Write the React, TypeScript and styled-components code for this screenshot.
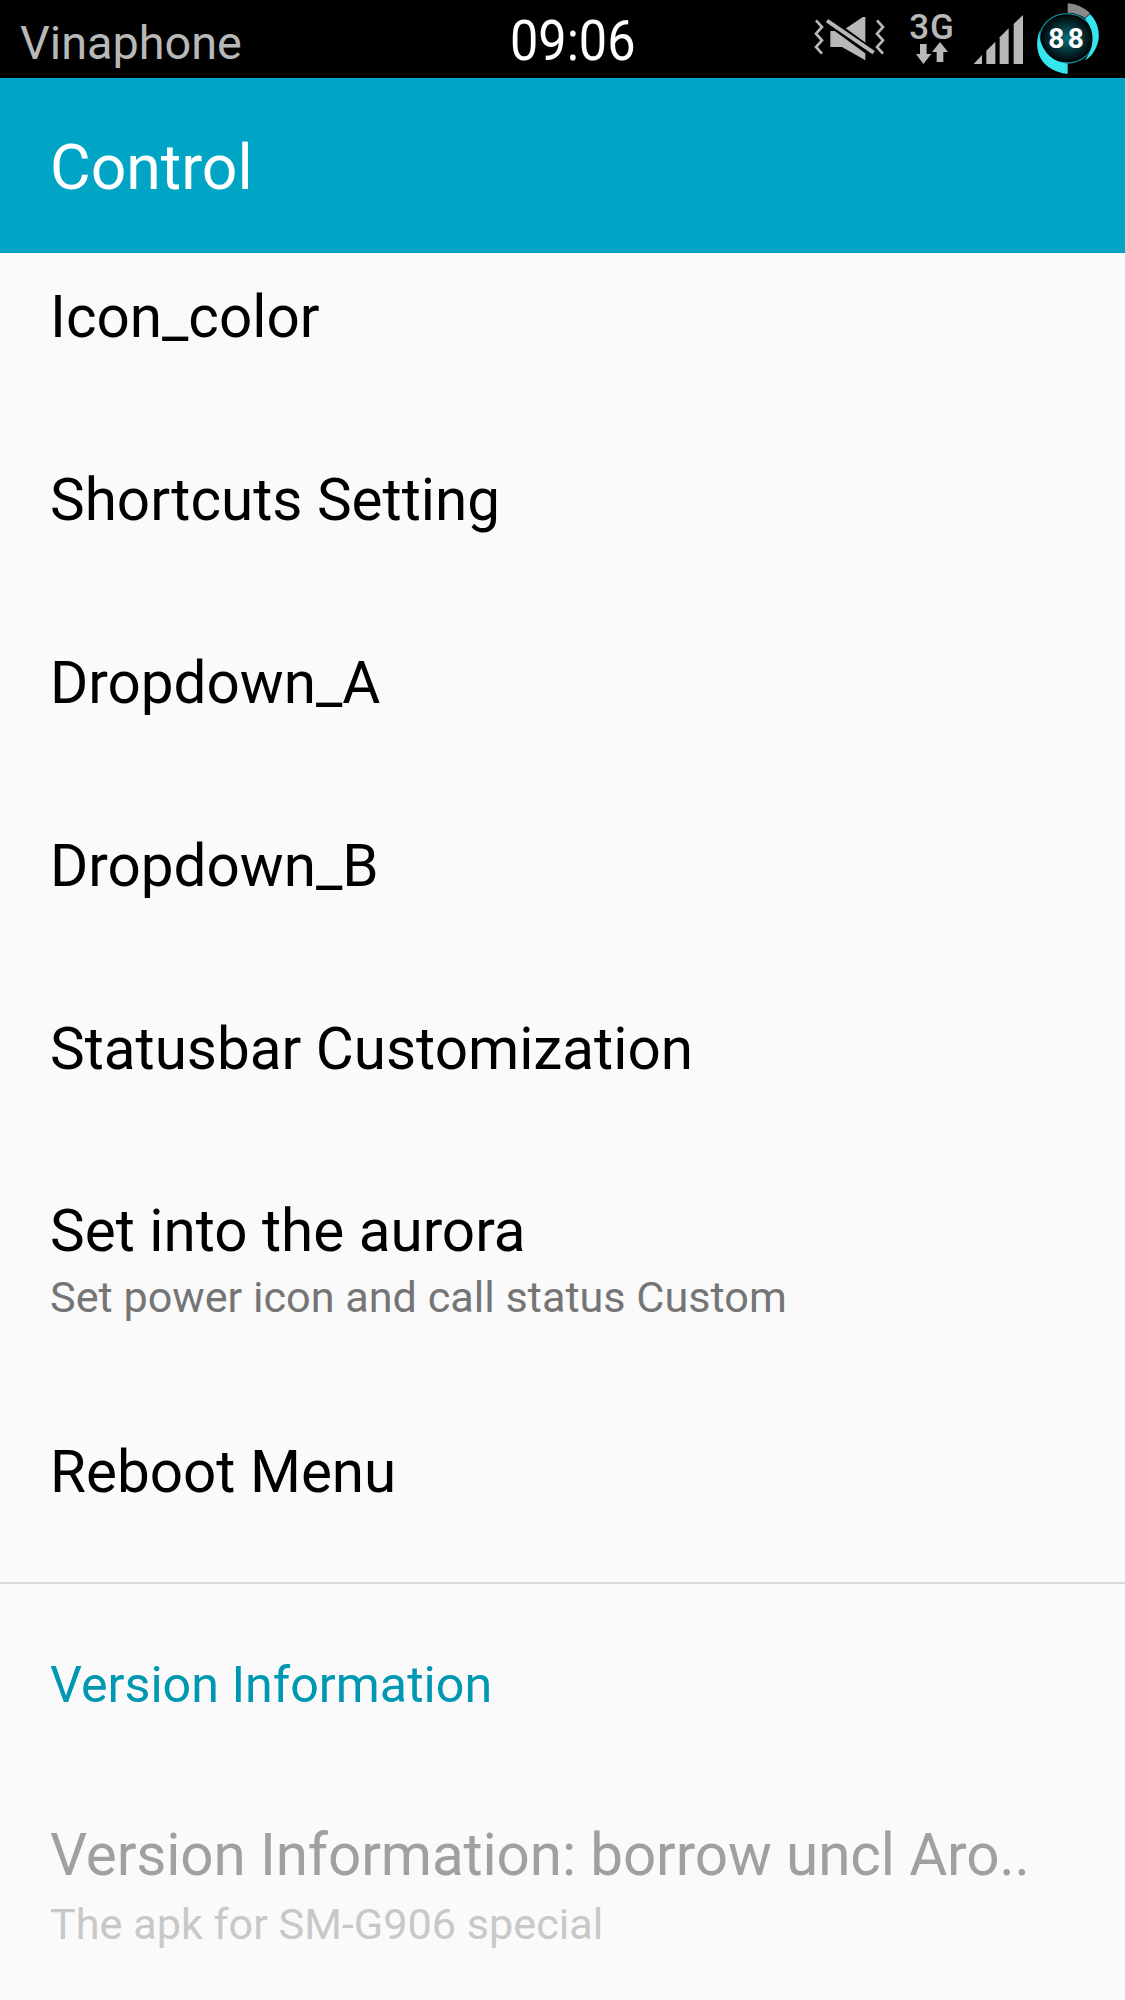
import React from 'react';
import styled, { createGlobalStyle } from 'styled-components';

const GlobalStyle = createGlobalStyle`
  html, body {
    margin: 0;
    padding: 0;
    background: #fafafa;
  }
`;

const Screen = styled.div`
  width: 1125px;
  height: 2000px;
  overflow: hidden;
  background: #fafafa;
  font-family: Roboto, "Liberation Sans", sans-serif;
  display: flex;
  flex-direction: column;
`;

const StatusBar = styled.div`
  height: 78px;
  flex: none;
  background: #000;
  display: flex;
  align-items: center;
  padding-left: 20px;
  position: relative;
  z-index: 2;
`;

const Carrier = styled.div`
  width: 490px;
  padding-top: 8px;
  color: #b8b8b8;
  font-size: 46.8px;
  white-space: nowrap;
`;

const Clock = styled.div`
  color: #fff;
  font-size: 56px;
  width: 121px;
  padding-top: 4px;
  white-space: nowrap;
  transform: scaleX(0.9);
  transform-origin: left center;
`;

const StatusIcons = styled.div`
  margin-left: auto;
  height: 78px;
  display: flex;
  align-items: center;
  padding-right: 25px;
`;

const Network = styled.div`
  width: 42px;
  margin: 0 20px 0 24px;
  display: flex;
  flex-direction: column;
  align-items: center;
  color: #b8b8b8;
`;

const NetworkLabel = styled.div`
  font-size: 35px;
  font-weight: 500;
  line-height: 28px;
  letter-spacing: 1px;
`;

const SignalSvg = styled.svg`
  margin-right: 12px;
`;

const AppBar = styled.div`
  height: 175px;
  flex: none;
  background: #00a5c5;
  display: flex;
  align-items: center;
  padding: 4px 0 0 50px;
  box-sizing: border-box;
  color: #fff;
  font-size: 62.5px;
  position: relative;
  z-index: 1;
`;

const List = styled.div`
  margin-top: -28px;
  display: flex;
  flex-direction: column;
`;

const Row = styled.div`
  height: 183px;
  padding: 0 50px;
  display: flex;
  flex-direction: column;
  justify-content: center;
  box-sizing: border-box;
`;

const TallRow = styled(Row)`
  height: 240px;
`;

const Title = styled.div<{ $disabled?: boolean }>`
  font-size: 58.4px;
  line-height: 68px;
  letter-spacing: ${p => (p.$disabled ? '-0.13px' : '0')};
  color: ${p => (p.$disabled ? '#a0a0a0' : '#000')};
  white-space: nowrap;
`;

const Subtitle = styled.div<{ $disabled?: boolean }>`
  margin-top: ${p => (p.$disabled ? '11px' : '8px')};
  font-size: 43.2px;
  line-height: 50px;
  color: ${p => (p.$disabled ? '#c8c8c8' : '#757575')};
  white-space: nowrap;
`;

const Divider = styled.div`
  height: 2px;
  margin-top: 19px;
  background: #d9d9d9;
`;

const SectionHeader = styled.div`
  padding: 73px 50px 52px;
  font-size: 50.2px;
  line-height: 56px;
  color: #0097b2;
`;

const MuteIcon = () => (
  <svg width="75" height="45" viewBox="115 55 225 135">
    <path d="M170 97H205L275 50V185L205 145H170Z" fill="#b8b8b8" />
    <path d="M155 60L305 170" stroke="#000" strokeWidth="26" />
    <path d="M160 66L300 162" stroke="#b8b8b8" strokeWidth="12" />
    <path
      d="M127 65L145 85L127 105L145 125L127 145L145 165"
      fill="none"
      stroke="#b8b8b8"
      strokeWidth="8"
    />
    <path
      d="M310 65L328 85L310 105L328 125L310 145L328 165"
      fill="none"
      stroke="#b8b8b8"
      strokeWidth="8"
    />
  </svg>
);

const NetworkArrows = () => (
  <svg width="32" height="22" viewBox="0 0 96 66" fill="#b8b8b8">
    <path d="M12 6H32V36H46L22 66L0 36H12Z" />
    <path d="M62 60H82V30H96L72 0L48 30H62Z" />
  </svg>
);

const SignalIcon = () => (
  <SignalSvg width="50" height="50" viewBox="0 0 150 150" fill="#b8b8b8">
    <path d="M2 150L27 123V150Z" />
    <path d="M40 150V110L67 83V150Z" />
    <path d="M80 150V70L107 43V150Z" />
    <path d="M122 150V30L150 3V150Z" />
  </SignalSvg>
);

const BatteryIcon = () => (
  <svg width="65" height="74" viewBox="0 0 195 222">
    <defs>
      <radialGradient id="batteryGlow">
        <stop offset="0%" stopColor="#0b6d78" />
        <stop offset="100%" stopColor="#010a0c" />
      </radialGradient>
    </defs>
    <ellipse cx="96" cy="109" rx="76" ry="68" fill="url(#batteryGlow)" />
    <ellipse cx="96" cy="109" rx="82" ry="74" fill="none" stroke="#0a8a96" strokeWidth="4" />
    <path d="M98 4C125 6 150 18 165 34L150 48C136 38 118 32 98 32Z" fill="#8a8a8a" />
    <path d="M165 36C190 60 198 100 186 130C178 150 168 165 150 175C165 155 175 130 172 100C170 80 160 62 150 50Z" fill="#35e6ee" />
    <path d="M14 85C-2 130 8 170 40 195C58 208 78 214 98 216V184C60 184 25 155 14 109Z" fill="#35e6ee" />
    <text x="98" y="139" textAnchor="middle" fontFamily="Roboto, sans-serif" fontSize="84" fontWeight="700" letterSpacing="10" fill="#fff">
      88
    </text>
  </svg>
);

const App: React.FC = () => (
  <Screen>
    <GlobalStyle />
    <StatusBar>
      <Carrier>Vinaphone</Carrier>
      <Clock>09:06</Clock>
      <StatusIcons>
        <MuteIcon />
        <Network>
          <NetworkLabel>3G</NetworkLabel>
          <NetworkArrows />
        </Network>
        <SignalIcon />
        <BatteryIcon />
      </StatusIcons>
    </StatusBar>
    <AppBar>Control</AppBar>
    <List>
      <Row><Title>Icon_color</Title></Row>
      <Row><Title>Shortcuts Setting</Title></Row>
      <Row><Title>Dropdown_A</Title></Row>
      <Row><Title>Dropdown_B</Title></Row>
      <Row><Title>Statusbar Customization</Title></Row>
      <TallRow>
        <Title>Set into the aurora</Title>
        <Subtitle>Set power icon and call status Custom</Subtitle>
      </TallRow>
      <Row><Title>Reboot Menu</Title></Row>
      <Divider />
      <SectionHeader>Version Information</SectionHeader>
      <TallRow>
        <Title $disabled>Version Information: borrow uncl Aro..</Title>
        <Subtitle $disabled>The apk for SM-G906 special</Subtitle>
      </TallRow>
    </List>
  </Screen>
);

export default App;
